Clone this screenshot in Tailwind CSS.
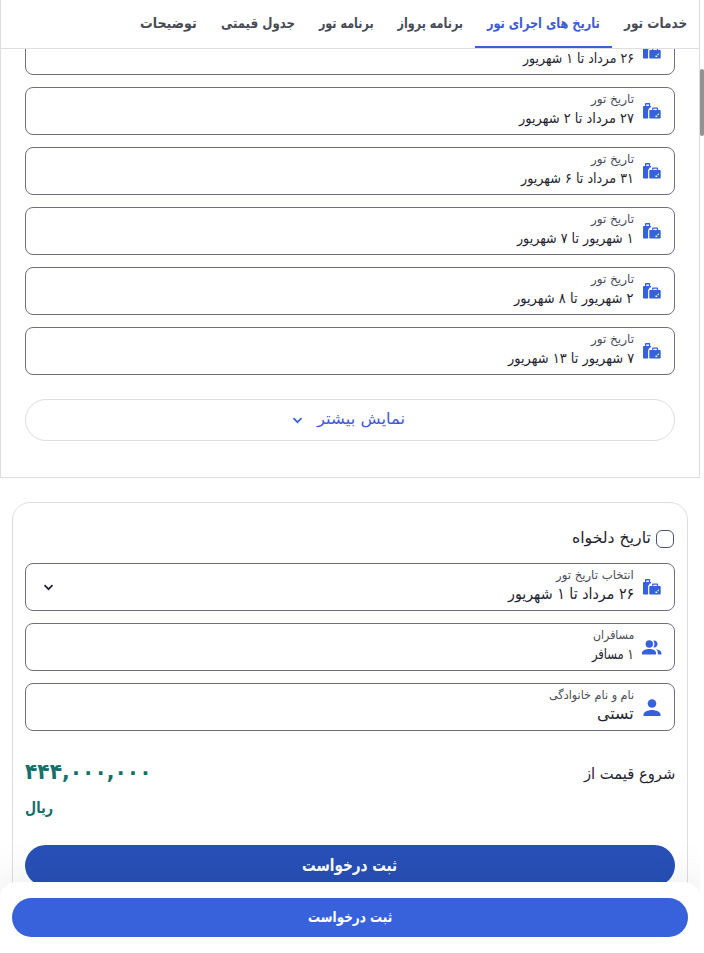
<!DOCTYPE html>
<html lang="fa" dir="rtl">
<head>
<meta charset="utf-8">
<title>رزرو تور</title>
<script src="https://cdn.jsdelivr.net/npm/@tailwindcss/browser@4"></script>
</head>
<body class="relative h-[953px] w-[704px] overflow-hidden bg-white font-['DejaVu_Sans',sans-serif] text-[#1f2430]">
<svg class="hidden" aria-hidden="true">
  <symbol id="bags" viewBox="0 0 18 16"><path fill-rule="evenodd" d="M0 4C0 3.400.4 3 1 3h1V.8c0-.5.3-.8.8-.8h3.600c.5 0 .8.300.8.8V3h.8v1.200c-1.200 0-2 .8-2 1.800-.6.2-.9.6-.9 1.200V15.500H1c-.6 0-1-.4-1-1zM3.200 1.400V3h2.800V1.400zM6.300 8c0-.7.400-1 1-1h1.800V5.400c0-.6.4-1 1-1h4c.6 0 1 .4 1 1V7h1.500c.7 0 1.100.4 1.100 1v6.500c0 .7-.4 1-1.100 1H7.300c-.6 0-1-.3-1-1zM10.300 5.700V7h3.600V5.700zM15.800 10.300l-1.600 1.400.7.900.9-.9zM14.200 12.800l-1.700-.4v1.700h1.700z"/></symbol>
  <symbol id="people" viewBox="0 0 20 16"><circle cx="7.300" cy="4" r="3.700"/><path d="M0 14.500v-1.800C0 10.200 4.300 8.900 7.300 8.900s6.700 1.300 6.700 3.800v1.800zM11.300.6c2.300-.6 4.200 1.100 4.200 3.400s-1.900 4-4.200 3.400c1.500-1.900 1.500-4.900 0-6.800zM14 9.200c2.800.5 5.400 1.600 5.400 3.500v1.800h-3.600v-1.800c0-1.500-.6-2.500-1.800-3.500z"/></symbol>
  <symbol id="person" viewBox="0 0 18 18"><circle cx="9" cy="4.500" r="4.300"/><path d="M.5 17v-1.500c0-2.900 5.600-4.400 8.500-4.400s8.500 1.500 8.500 4.400V17z"/></symbol>
  <symbol id="chev" viewBox="0 0 10 7"><path d="M1 1.200 5 5.200 9 1.200" fill="none" stroke="currentColor" stroke-width="1.700"/></symbol>
</svg>

<header class="absolute top-0 right-[4px] z-10 flex h-[49px] w-[700px] border-x border-b border-[#dedede] bg-white text-[14px] font-bold leading-[20px] text-[#484b56]">
  <div class="px-3 pt-[13px]"><span class="inline-block whitespace-nowrap" data-w="63">خدمات تور</span></div>
  <div class="h-[48px] border-b-2 border-[#3661dc] px-3 pt-[13px] text-[#3d5bdc]"><span class="inline-block whitespace-nowrap" data-w="113">تاریخ های اجرای تور</span></div>
  <div class="px-3 pt-[13px]"><span class="inline-block whitespace-nowrap" data-w="65.500">برنامه پرواز</span></div>
  <div class="px-3 pt-[13px]"><span class="inline-block whitespace-nowrap" data-w="55">برنامه تور</span></div>
  <div class="px-3 pt-[13px]"><span class="inline-block whitespace-nowrap" data-w="74">جدول قیمتی</span></div>
  <div class="px-3 pt-[13px]"><span class="inline-block whitespace-nowrap" data-w="57">توضیحات</span></div>
</header>

<div class="absolute top-[69px] right-0 h-[67px] w-[4px] rounded-sm bg-[#929292]"></div>

<main class="mr-[4px] w-[700px]">
  <section class="h-[478px] border border-t-0 border-[#dedede] px-6 pt-[27px]">
    <div class="flex flex-col gap-3" id="dates"></div>
    <button class="mt-6 flex h-[42px] w-full items-center justify-center gap-[14px] rounded-full border border-[#dedede] pr-[2px] text-[15.5px] text-[#4059d6]">
      <span class="inline-block shrink-0 whitespace-nowrap" data-w="88">نمایش بیشتر</span>
      <svg class="h-[7px] w-[11px] text-[#3661dc]"><use href="#chev"/></svg>
    </button>
  </section>

  <section class="mx-3 mt-6 h-[440px] rounded-[18px] border border-[#dedede] px-3 pt-[27px]">
    <label class="flex h-[18px] items-center gap-[5px]">
      <span class="mr-[1px] h-[18px] w-[18px] rounded-[6px] border border-[#465575]"></span>
      <span class="inline-block shrink-0 whitespace-nowrap text-[15.5px]" data-w="79">تاریخ دلخواه</span>
    </label>
    <div class="mt-[15px] flex flex-col gap-3">
      <div class="flex h-12 rounded-[8px] border border-[#706f82] pr-[13px]">
        <svg class="mt-[15px] h-[16px] w-[18px] fill-[#3661dc]"><use href="#bags"/></svg>
        <div class="mr-[9px]">
          <div class="h-[20px] pt-[1px] text-[12px] leading-[20px] text-[#4a4c58]"><span class="inline-block whitespace-nowrap" data-w="78">انتخاب تاریخ تور</span></div>
          <div class="h-[22px] text-[15.5px] leading-[20px]"><span class="inline-block whitespace-nowrap" data-w="126">۲۶ مرداد تا ۱ شهریور</span></div>
        </div>
        <svg class="mt-[20px] mr-auto ml-[17px] h-[7px] w-[11px]"><use href="#chev"/></svg>
      </div>
      <div class="flex h-12 rounded-[8px] border border-[#706f82] pr-[12px]">
        <svg class="mt-[16px] h-[16px] w-[20px] fill-[#3661dc]"><use href="#people"/></svg>
        <div class="mr-[8px]">
          <div class="h-[20px] pt-[1px] text-[12px] leading-[20px] text-[#4a4c58]"><span class="inline-block whitespace-nowrap" data-w="41">مسافران</span></div>
          <div class="h-[22px] text-[14px] leading-[20px]"><span class="inline-block whitespace-nowrap" data-w="42">۱ مسافر</span></div>
        </div>
      </div>
      <div class="flex h-12 rounded-[8px] border border-[#706f82] pr-[13px]">
        <svg class="mt-[15px] h-[18px] w-[18px] fill-[#3661dc]"><use href="#person"/></svg>
        <div class="mr-[9px]">
          <div class="h-[20px] pt-[1px] text-[12px] leading-[20px] text-[#4a4c58]"><span class="inline-block whitespace-nowrap" data-w="85">نام و نام خانوادگی</span></div>
          <div class="h-[22px] text-[15.5px] leading-[20px]"><span class="inline-block whitespace-nowrap" data-w="37">تستی</span></div>
        </div>
      </div>
    </div>
    <div class="mt-6 flex justify-between">
      <span class="mt-[8px] inline-block shrink-0 whitespace-nowrap text-[15.5px] leading-[22px]" data-w="91">شروع قیمت از</span>
      <div class="flex flex-col items-end font-bold text-[#13706a]">
        <span class="inline-block whitespace-nowrap text-[22px] leading-[34px]" data-w="127">۴۴۴,۰۰۰,۰۰۰</span>
        <span class="mt-[2px] inline-block whitespace-nowrap text-[16px] leading-[34px]" data-w="28">ریال</span>
      </div>
    </div>
    <button class="mt-5 flex h-[41px] w-full items-center justify-center rounded-full bg-[#2850b8] text-[17px] font-bold text-white"><span class="inline-block shrink-0 whitespace-nowrap" data-w="95">ثبت درخواست</span></button>
  </section>
</main>

<div class="absolute right-[4px] bottom-0 z-10 h-[171px] w-[700px] overflow-hidden pt-[100px]">
  <footer class="h-[71px] rounded-t-[16px] bg-white px-3 pt-4 shadow-[0_0_50px_rgba(0,0,0,0.1)]">
    <button class="flex h-[39px] w-full items-center justify-center rounded-full bg-[#3762dc] text-[15px] font-bold text-white"><span class="inline-block shrink-0 whitespace-nowrap" data-w="84">ثبت درخواست</span></button>
  </footer>
</div>

<script>
const dates = [
  ['۲۶ مرداد تا ۱ شهریور', 111],
  ['۲۷ مرداد تا ۲ شهریور', 115],
  ['۳۱ مرداد تا ۶ شهریور', 113],
  ['۱ شهریور تا ۷ شهریور', 117],
  ['۲ شهریور تا ۸ شهریور', 120],
  ['۷ شهریور تا ۱۳ شهریور', 126],
];
document.getElementById('dates').innerHTML = dates.map(([t, w]) => `
  <div class="flex h-12 rounded-[8px] border border-[#706f82] pr-[13px]">
    <svg class="mt-[15px] h-[16px] w-[18px] fill-[#3661dc]"><use href="#bags"/></svg>
    <div class="mr-[9px]">
      <div class="h-[20px] pt-[1px] text-[12px] leading-[20px] text-[#4a4c58]"><span class="inline-block whitespace-nowrap" data-w="43">تاریخ تور</span></div>
      <div class="h-[22px] text-[14px] leading-[20px]"><span class="inline-block whitespace-nowrap" data-w="${w}">${t}</span></div>
    </div>
  </div>`).join('');
const fit = el => {
  const n = el.offsetWidth, w = +el.dataset.w;
  if (!n) return;
  el.style.transformOrigin = 'right center';
  el.style.transform = `scaleX(${w / n})`;
  el.style.marginLeft = `${w - n}px`;
};
const labels = document.querySelectorAll('[data-w]');
const observer = new ResizeObserver(entries => entries.forEach(e => fit(e.target)));
labels.forEach(el => { fit(el); observer.observe(el); });
window.addEventListener('load', () => labels.forEach(fit));
</script>
</body>
</html>
